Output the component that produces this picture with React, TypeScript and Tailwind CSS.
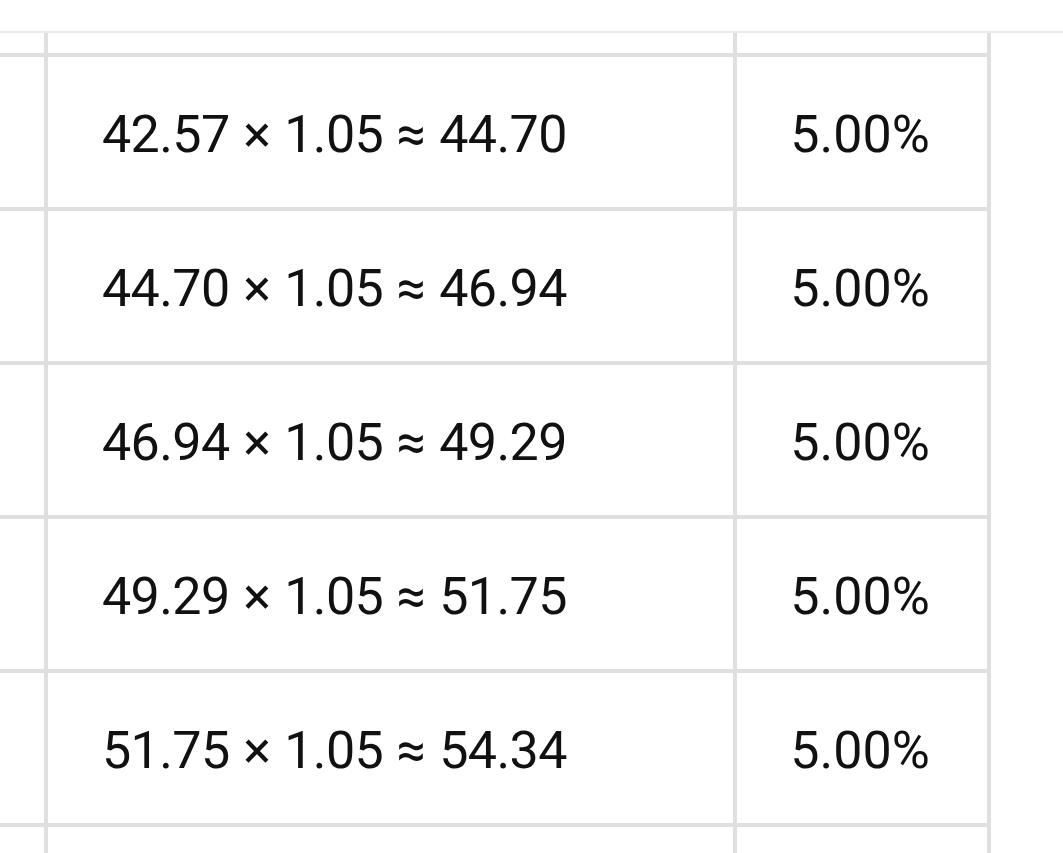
const rows = [
  { formula: '42.57 × 1.05 ≈ 44.70', rate: '5.00%' },
  { formula: '44.70 × 1.05 ≈ 46.94', rate: '5.00%' },
  { formula: '46.94 × 1.05 ≈ 49.29', rate: '5.00%' },
  { formula: '49.29 × 1.05 ≈ 51.75', rate: '5.00%' },
  { formula: '51.75 × 1.05 ≈ 54.34', rate: '5.00%' },
];

function Row({ formula, rate, h }: { formula?: string; rate?: string; h: string }) {
  return (
    <div className={`flex w-[991px] border-b-4 border-[#dfdfdf] ${h}`}>
      <div className="w-[44px] shrink-0" />
      <div className="flex w-[689px] shrink-0 items-center border-l-4 border-[#dfdfdf] pl-[54px] pt-[6px] tracking-[-0.6px] [word-spacing:1.4px]">
        {formula}
      </div>
      <div className="flex w-[258px] shrink-0 items-center justify-center border-x-4 border-[#dfdfdf] pt-[6px] pr-[4px]">
        {rate}
      </div>
    </div>
  );
}

export default function App() {
  return (
    <div className="h-[853px] w-[1063px] overflow-hidden bg-white pt-[31px] font-['Roboto',sans-serif] text-[52px] leading-none text-[#111]">
      <div className="border-t-2 border-[#ebebeb]">
        <Row h="h-[24px]" />
        {rows.map((r) => (
          <Row key={r.formula} formula={r.formula} rate={r.rate} h="h-[154px]" />
        ))}
        <Row h="h-[154px]" />
      </div>
    </div>
  );
}
